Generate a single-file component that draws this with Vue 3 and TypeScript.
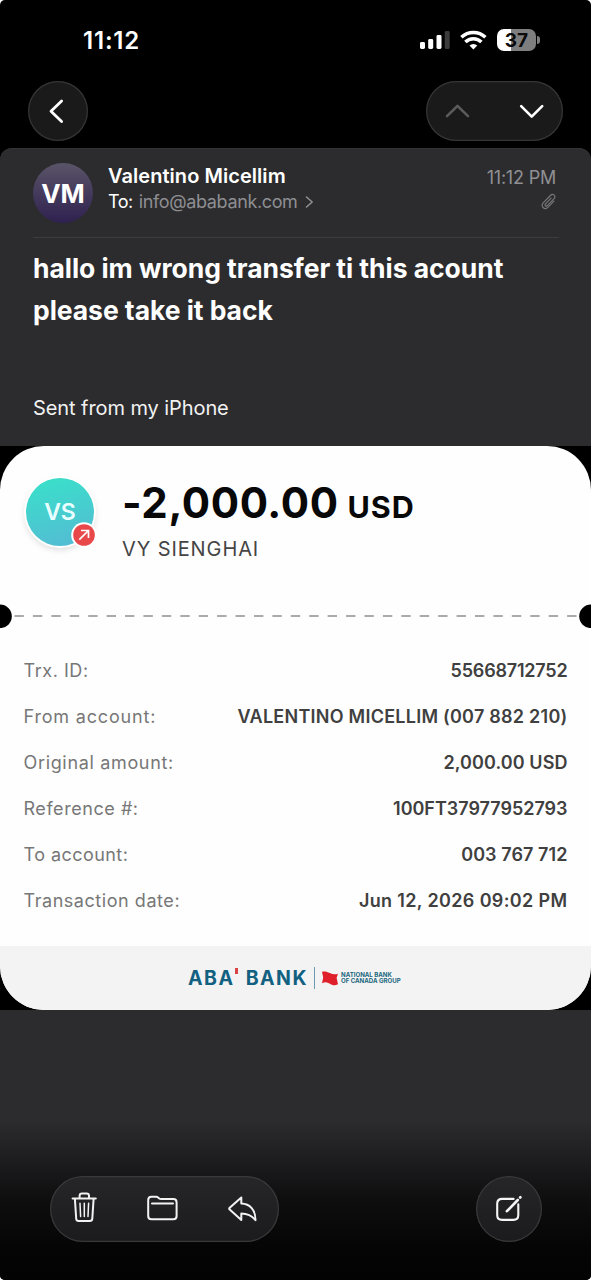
<script setup lang="ts">
interface Row {
  id: string
  label: string
  value: string
}

const rows: Row[] = [
  { id: 'trx', label: 'Trx. ID:', value: '55668712752' },
  { id: 'from', label: 'From account:', value: 'VALENTINO MICELLIM (007 882 210)' },
  { id: 'original', label: 'Original amount:', value: '2,000.00 USD' },
  { id: 'ref', label: 'Reference #:', value: '100FT37977952793' },
  { id: 'dest', label: 'To account:', value: '003 767 712' },
  { id: 'date', label: 'Transaction date:', value: 'Jun 12, 2026 09:02 PM' },
]
</script>

<template>
  <div class="backdrop">
    <div class="screen">
      <header class="status">
        <span class="clock">11:12</span>
        <div class="indicators">
          <svg class="signal" width="31" height="20" viewBox="0 0 31 20">
            <rect x="0" y="12" width="5" height="7" rx="1.4" fill="#fff" />
            <rect x="8.2" y="9" width="5" height="10" rx="1.4" fill="#fff" />
            <rect x="16.5" y="5" width="5" height="14" rx="1.4" fill="#fff" />
            <rect x="24.7" y="1" width="5" height="18" rx="1.4" fill="#3b3b3c" />
          </svg>
          <svg class="wifi" width="28" height="20" viewBox="0 0 28 20" fill="none" stroke="#fff" stroke-width="3.5">
            <path d="M1.4 7.2A17.4 17.4 0 0 1 25.4 7.2" />
            <path d="M5.4 12A11.4 11.4 0 0 1 21.4 12" />
            <path d="M13.4 19.6l-3.9-4.1a5.6 5.6 0 0 1 7.8 0z" fill="#fff" stroke="none" />
          </svg>
          <div class="battery"><span>37</span></div>
          <i class="battery-tip"></i>
        </div>
      </header>

      <nav class="nav">
        <button class="glass back" aria-label="Back">
          <svg width="60" height="60" viewBox="0 0 60 60" fill="none" stroke="#fff" stroke-width="2.8" stroke-linecap="round" stroke-linejoin="round">
            <path d="M33.6 20L23 30.3L33.6 40.5" />
          </svg>
        </button>
        <div class="glass pager">
          <svg width="137" height="60" viewBox="0 0 137 60" fill="none" stroke-width="2.6" stroke-linecap="round" stroke-linejoin="round">
            <path d="M21 35.2L31.5 24.8L42 35.2" stroke="#5b5b5c" />
            <path d="M95.2 25.2L105.7 35.7L116.2 25.2" stroke="#fff" />
          </svg>
        </div>
      </nav>

      <main class="sheet">
        <section class="sender">
          <div class="avatar">VM</div>
          <div class="who">
            <div class="name">Valentino Micellim</div>
            <div class="to">
              <span class="to-label">To:</span>
              <span class="to-addr">info@ababank.com</span>
              <svg width="9" height="14" viewBox="0 0 9 14" fill="none" stroke="#929296" stroke-width="1.5" stroke-linecap="round" stroke-linejoin="round">
                <path d="M1.5 2L7.2 7L1.5 12" />
              </svg>
            </div>
          </div>
          <div class="meta">
            <span class="time">11:12 PM</span>
            <svg width="15" height="17" viewBox="0 0 15 17" fill="none" stroke="#78787c" stroke-width="1.15" stroke-linecap="round" stroke-linejoin="round">
              <path d="M12.9 8.2L7.1 14.1C5.5 15.7 3.4 15.8 2.1 14.5C.8 13.2 .9 11.2 2.4 9.7L9.4 2.5C10.6 1.3 12.2 1.1 13.2 2.1C14.2 3.1 14 4.7 12.9 5.9L6.5 12.4C5.8 13.1 5 13.2 4.4 12.7C3.9 12.1 4 11.3 4.7 10.6L10.1 5.1" />
            </svg>
          </div>
        </section>

        <section class="message">
          <h1>hallo im wrong transfer ti this acount<br />please take it back</h1>
          <p>Sent from my iPhone</p>
        </section>

        <section class="receipt-frame">
          <article class="receipt">
            <div class="summary">
              <div class="payee">
                <span>VS</span>
                <svg class="badge" width="26" height="26" viewBox="0 0 26 26">
                  <circle cx="13" cy="13" r="12.8" fill="#fff" />
                  <circle cx="13" cy="13" r="10.8" fill="#e8484a" />
                  <path d="M8.3 17.7L17 9M10 8.5H17.5V16" fill="none" stroke="#fff" stroke-width="1.7" />
                </svg>
              </div>
              <div class="total">
                <div class="amount"><b>-2,000.00</b><span>USD</span></div>
                <div class="payee-name">VY SIENGHAI</div>
              </div>
            </div>

            <svg class="perforation" width="591" height="24" viewBox="0 0 591 24">
              <line x1="14.5" y1="12" x2="576.5" y2="12" stroke="#8f8f8f" stroke-width="1.5" stroke-dasharray="9.4 9.02" />
              <circle cx="0" cy="12.3" r="11.8" />
              <circle cx="591" cy="12.3" r="11.8" />
            </svg>

            <dl class="details">
              <div v-for="row in rows" :key="row.id" class="row" :class="row.id">
                <dt>{{ row.label }}</dt>
                <dd>{{ row.value }}</dd>
              </div>
            </dl>

            <footer class="brand">
              <div class="aba"><span>ABA</span><i></i><span>BANK</span></div>
              <div class="rule"></div>
              <svg width="16" height="15" viewBox="0 0 16 15" fill="#df1f2a">
                <path d="M0 .8C3 .1 5 .7 7.8 2.1C10.5 3.4 13 3.7 16 2.8L14.6 6.8L16 13.2C12.7 14.8 10.5 14.4 8 12.7C5.3 10.9 3 10.7 0 12.2L1.2 6.4Z" />
              </svg>
              <div class="nbc"><span>NATIONAL BANK</span><span>OF CANADA GROUP</span></div>
            </footer>
          </article>
        </section>
      </main>

      <footer class="toolbar">
        <div class="glass tools">
          <svg width="229" height="65" viewBox="0 0 229 65" fill="none" stroke="#f2f2f2" stroke-width="2" stroke-linecap="round" stroke-linejoin="round">
            <path d="M22.6 22.5H45.8M29.6 22V19.8Q29.6 17.4 32 17.4H36.6Q39 17.4 39 19.8V22M24.9 23L26.2 42.7Q26.4 45 28.7 45H39.8Q42.1 45 42.3 42.7L43.6 23" />
            <path d="M30 27.2L30.6 40.5M34.3 27.2V40.5M38.6 27.2L38 40.5" stroke-width="1.5" />
            <path d="M98.2 40V24Q98.2 20.7 101.5 20.7H106Q107.3 20.7 108.2 21.6L109.2 22.5Q110 23.1 111.2 23.1H123.3Q126.6 23.1 126.6 26.4V40Q126.6 43.3 123.3 43.3H101.5Q98.2 43.3 98.2 40ZM102 27.5H123" />
            <path d="M191.3 21.5V27.6C200 27.9 205.6 34 205.5 44.2Q200.2 37.7 191.3 37.6V44L179.7 33.6Q178.8 32.7 179.7 31.8Z" />
          </svg>
        </div>
        <button class="glass compose" aria-label="Compose">
          <svg width="65" height="65" viewBox="0 0 65 65" fill="none" stroke="#f5f5f5" stroke-width="2.1" stroke-linecap="round" stroke-linejoin="round">
            <path d="M37.6 21.9H26.1Q21.2 21.9 21.2 26.8V38Q21.2 42.9 26.1 42.9H37.4Q42.3 42.9 42.3 38V27.2" />
            <path d="M30.9 34.2L41.8 23" stroke-width="2.6" />
            <path d="M44.2 20.5L44.4 20.3" stroke-width="2.8" />
          </svg>
        </button>
      </footer>
    </div>
  </div>
</template>

<style>
body {
  margin: 0;
}
</style>

<style scoped>
* {
  box-sizing: border-box;
}
.backdrop {
  width: 591px;
  height: 1280px;
  background: #fff;
  overflow: hidden;
}
.screen {
  position: relative;
  width: 591px;
  height: 1280px;
  background: #000;
  border-radius: 5px;
  overflow: hidden;
  font-family: Inter, "Liberation Sans", sans-serif;
  color: #fff;
  white-space: nowrap;
}
.status {
  height: 81px;
  padding: 0 51px 0 83px;
  display: flex;
  justify-content: space-between;
}
.clock {
  line-height: 81px;
  font-size: 24px;
  font-weight: 600;
  letter-spacing: 0.8px;
}
.indicators {
  height: 80px;
  display: flex;
  align-items: center;
}
.wifi {
  margin-left: 9px;
}
.battery {
  width: 39px;
  height: 22px;
  margin-left: 9px;
  border-radius: 7px;
  background: linear-gradient(90deg, #fff 37%, #7e7e7e 37%);
  color: #0b0b0b;
  font-size: 19px;
  font-weight: 700;
  line-height: 23px;
  text-align: center;
}
.battery-tip {
  width: 3px;
  height: 8px;
  margin-left: 1px;
  border-radius: 0 3px 3px 0;
  background: #7e7e7e;
}
.nav {
  height: 67px;
  padding: 0 28px;
  display: flex;
  justify-content: space-between;
}
.glass {
  display: block;
  padding: 0;
  border: 0;
  background: #1a1a1a;
  box-shadow: inset 0 0 0 1.2px #353536;
}
.glass svg {
  display: block;
}
.back {
  width: 60px;
  height: 60px;
  border-radius: 50%;
}
.pager {
  width: 137px;
  height: 60px;
  border-radius: 30px;
}
.sheet {
  height: 1132px;
  border-radius: 12px 12px 0 0;
  background: #2c2c2e;
  box-shadow: inset 0 1px 0 #333335;
}
.sender {
  height: 90px;
  margin: 0 32px 0 33px;
  padding-top: 15px;
  border-bottom: 1px solid #3c3c3e;
  display: flex;
}
.avatar {
  width: 60px;
  height: 60px;
  border-radius: 50%;
  background: linear-gradient(#5a5468, #2f2150);
  font-size: 26px;
  font-weight: 700;
  line-height: 61px;
  text-align: center;
}
.who {
  margin-left: 15px;
}
.name {
  font-size: 20px;
  font-weight: 600;
  line-height: 26px;
  letter-spacing: 0.05px;
}
.to {
  display: flex;
  align-items: center;
  font-size: 18px;
  line-height: 26px;
}
.to-label {
  letter-spacing: -0.5px;
}
.to-addr {
  margin: 0 7px 0 6px;
  letter-spacing: -0.36px;
  color: #8e8e92;
}
.meta {
  margin: 0 3px 0 auto;
  display: flex;
  flex-direction: column;
  align-items: flex-end;
}
.time {
  font-size: 18px;
  line-height: 29px;
  letter-spacing: -0.2px;
  color: #909094;
}
.meta svg {
  margin-top: 1px;
}
.message {
  height: 208px;
  padding: 9px 33px 0;
}
h1 {
  margin: 0;
  font-size: 26.5px;
  font-weight: 700;
  line-height: 42px;
  letter-spacing: -0.05px;
}
p {
  margin: 64px 0 0;
  font-size: 20px;
  line-height: 26px;
  letter-spacing: -0.08px;
  color: #f2f2f2;
}
.receipt-frame {
  height: 564px;
  background: #000;
}
.receipt {
  height: 564px;
  border-radius: 44px;
  background: #fefefe;
  overflow: hidden;
}
.summary {
  height: 158px;
  padding: 32px 26px 0;
  display: flex;
}
.payee {
  position: relative;
  width: 68px;
  height: 68px;
  border-radius: 50%;
  background: linear-gradient(165deg, #3cdccb 15%, #56b9d4);
  box-shadow: 0 0 0 2px #fff, 0 3px 6px 1px #0002;
  color: #e9ffff;
  font-size: 23px;
  font-weight: 600;
  line-height: 68px;
  text-align: center;
}
.badge {
  position: absolute;
  right: -3px;
  bottom: -2px;
}
.total {
  margin-left: 28px;
}
.amount {
  display: flex;
  align-items: baseline;
  height: 50px;
  color: #080808;
  line-height: 50px;
}
.amount b {
  font-size: 42px;
  font-weight: 650;
  letter-spacing: 0.6px;
}
.amount span {
  margin: 0 0 2px 9px;
  font-size: 30.5px;
  font-weight: 650;
  line-height: 46px;
  letter-spacing: 0.9px;
}
.payee-name {
  margin-top: 8px;
  font-size: 20px;
  line-height: 26px;
  letter-spacing: 0.9px;
  color: #454545;
}
.perforation {
  display: block;
}
.details {
  height: 318px;
  margin: 0;
  padding: 20px 23.5px 0;
}
.row {
  height: 46px;
  display: flex;
  justify-content: space-between;
  align-items: center;
  font-size: 18px;
  line-height: 26px;
}
dt {
  color: #777;
  letter-spacing: 0.55px;
}
dd {
  margin: 0;
  color: #404040;
  font-weight: 600;
  letter-spacing: 0.08px;
}
.from dt {
  letter-spacing: 0.82px;
}
.original dt {
  letter-spacing: 0.66px;
}
.dest dt {
  letter-spacing: 0.45px;
}
.trx dd {
  letter-spacing: -0.2px;
}
.ref dd {
  letter-spacing: -0.02px;
}
.from dd {
  letter-spacing: 0.25px;
}
.date dd {
  letter-spacing: 0.36px;
}
.brand {
  height: 64px;
  padding-left: 188px;
  background: #f3f3f3;
  display: flex;
  align-items: center;
}
.aba {
  display: flex;
  width: 120px;
  justify-content: space-between;
  color: #126181;
  font-size: 19.5px;
  font-weight: 700;
  line-height: 25px;
  letter-spacing: 1.5px;
}
.aba i {
  width: 3px;
  height: 6px;
  margin: 2px 4px 0 -4px;
  background: #d94343;
}
.rule {
  width: 1px;
  height: 22px;
  margin: 0 7px 0 6px;
  background: #6c9bb0;
}
.nbc {
  margin-left: 3px;
  display: flex;
  flex-direction: column;
  color: #20677f;
  font-size: 6.1px;
  font-weight: 700;
  line-height: 6.5px;
}
.toolbar {
  position: absolute;
  left: 0;
  right: 0;
  bottom: 0;
  height: 160px;
  padding: 56px 49px 0 50px;
  display: flex;
  justify-content: space-between;
  background: linear-gradient(#2c2c2e 0, #202022 20%, #0e0e0f 50%, #050505 80%, #030303);
}
.toolbar .glass {
  background: linear-gradient(#262628, #1b1b1d);
  box-shadow: inset 0 0 0 1.2px #39393b;
}
.tools {
  width: 229px;
  height: 66px;
  border-radius: 33px;
}
.compose {
  width: 66px;
  height: 66px;
  border-radius: 50%;
}
</style>
